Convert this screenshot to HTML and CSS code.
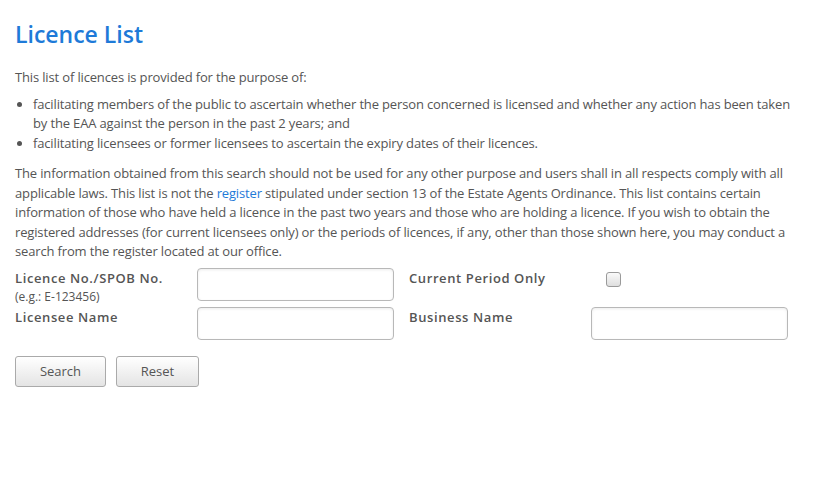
FILE: index.html
```html
<!DOCTYPE html>
<html>
<head>
<meta charset="utf-8">
<link rel="stylesheet" href="styles.css">
</head>
<body>
<div class="page">
  <h1 class="title">Licence List</h1>
  <p class="intro">This list of licences is provided for the purpose of:</p>
  <ul class="purposes">
    <li>facilitating members of the public to ascertain whether the person concerned is licensed and whether any action has been taken by the EAA against the person in the past 2 years; and</li>
    <li>facilitating licensees or former licensees to ascertain the expiry dates of their licences.</li>
  </ul>
  <p class="info">The information obtained from this search should not be used for any other purpose and users shall in all respects comply with all applicable laws. This list is not the <a href="#" class="link">register</a> stipulated under section 13 of the Estate Agents Ordinance. This list contains certain information of those who have held a licence in the past two years and those who are holding a licence. If you wish to obtain the registered addresses (for current licensees only) or the periods of licences, if any, other than those shown here, you may conduct a search from the register located at our office.</p>
  <form class="search-form">
    <div class="label-cell">
      <div class="label">Licence No./SPOB No.</div>
      <div class="hint">(e.g.: E-123456)</div>
    </div>
    <div class="field-cell"><input class="text-input" type="text"></div>
    <div class="label-cell"><div class="label">Current Period Only</div></div>
    <div class="field-cell check-cell"><input class="checkbox" type="checkbox"></div>
    <div class="label-cell"><div class="label">Licensee Name</div></div>
    <div class="field-cell"><input class="text-input" type="text"></div>
    <div class="label-cell"><div class="label">Business Name</div></div>
    <div class="field-cell"><input class="text-input" type="text"></div>
  </form>
  <div class="buttons">
    <button class="btn btn-search" type="button">Search</button>
    <button class="btn btn-reset" type="button">Reset</button>
  </div>
</div>
</body>
</html>
```
FILE: styles.css
```css
html, body {
  margin: 0;
  padding: 0;
  background: #fff;
}
body {
  font-family: "Open Sans", "Liberation Sans", sans-serif;
  font-size: 13px;
  line-height: 19.5px;
  color: #555;
}
.page {
  padding: 0 15px;
}
.title {
  margin: 0;
  padding-top: 19px;
  font-size: 23px;
  line-height: 30px;
  font-weight: 600;
  color: #1e7ad8;
}
.intro,
.purposes,
.info {
  letter-spacing: -0.15px;
}
.intro {
  margin: 19px 0 7px 0;
}
.purposes {
  margin: 0;
  padding-left: 18px;
}
.purposes li {
  margin: 0;
}
.info {
  margin: 11px 0 6px 0;
}
.link {
  color: #1e7ad8;
  text-decoration: none;
}
.search-form {
  display: grid;
  grid-template-columns: 182px 212px 182px 197px;
  grid-auto-rows: 33px;
  row-gap: 6px;
}
.label {
  font-weight: 600;
  line-height: 20px;
  letter-spacing: 0.6px;
  white-space: nowrap;
}
.hint {
  font-size: 12px;
  line-height: 18px;
  letter-spacing: 0;
}
.field-cell {
  display: flex;
}
.text-input {
  box-sizing: border-box;
  width: 197px;
  height: 33px;
  margin: 0;
  border: 1px solid #b8b8b8;
  border-radius: 4px;
  background: #fff;
  box-shadow: inset 0 1px 3px rgba(0,0,0,0.08);
  font-family: inherit;
  font-size: 13px;
  padding: 4px 8px;
}
.check-cell {
  padding-left: 15px;
  padding-top: 4px;
}
.checkbox {
  appearance: none;
  -webkit-appearance: none;
  box-sizing: border-box;
  width: 15px;
  height: 15px;
  margin: 0;
  border: 1px solid #9a9a9a;
  border-radius: 3px;
  background: linear-gradient(#fafafa, #dedede);
}
.buttons {
  display: flex;
  gap: 10px;
  margin-top: 16px;
}
.btn {
  box-sizing: border-box;
  height: 31px;
  border: 1px solid #aaa;
  border-radius: 3px;
  background: linear-gradient(#ffffff, #e4e4e4);
  font-family: inherit;
  font-size: 13px;
  color: #555;
  padding: 0;
}
.btn-search {
  width: 91px;
}
.btn-reset {
  width: 83px;
}
```
